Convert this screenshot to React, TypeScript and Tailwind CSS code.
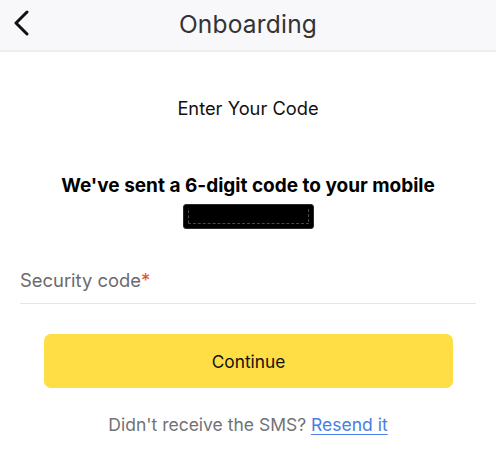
export default function App() {
  return (
    <div className="w-[496px] h-[461px] bg-white font-['Inter','Liberation_Sans',sans-serif] overflow-hidden">
      {/* header */}
      <div className="relative h-[52px] bg-[#f8f7fa] border-b-2 border-[#efedf1] flex items-center justify-center">
        <button className="absolute left-[10px] top-[9px] w-[22px] h-[28px] flex items-center justify-center">
          <svg width="18" height="26" viewBox="0 0 18 26" fill="none">
            <path d="M15 2 L4 13 L15 24" stroke="#111" strokeWidth="3" strokeLinecap="round" strokeLinejoin="round" />
          </svg>
        </button>
        <h1 className="text-[24.5px] leading-none text-[#333336] tracking-[0.2px] -mt-[1px]">Onboarding</h1>
      </div>

      <div className="flex flex-col items-center">
        <p className="mt-[45px] text-[18.3px] leading-[22px] text-[#111]">Enter Your Code</p>
        <p className="mt-[56px] text-[19px] leading-[22px] font-bold text-black">We've sent a 6-digit code to your mobile</p>
        <div className="mt-[7px] w-[131px] h-[25px] bg-black rounded-[3px] border border-[#2a2a2a] px-[4px] pt-[3px] pb-[4px]">
          <div className="w-full h-full border-x border-b border-dashed border-[#4a4a4a] rounded-[1px]" />
        </div>
      </div>

      <div className="mx-[20px] mt-[40px] border-b border-[#e6e4e8] pb-[10px]">
        <span className="text-[18.4px] leading-[22px] text-[#6b6b6e]">
          Security code<span className="text-[#e2532f]">*</span>
        </span>
      </div>

      <div className="px-[44px] mt-[30px]">
        <button className="w-[409px] h-[54px] rounded-[7px] bg-[#ffdd44] text-[17.3px] text-[#111] pt-[2px]">Continue</button>
      </div>

      <p className="mt-[26px] text-center text-[17.5px] leading-[22px] text-[#727275]">
        Didn't receive the SMS? <a className="text-[#4a7ee0] underline underline-offset-[3px]">Resend it</a>
      </p>
    </div>
  );
}
